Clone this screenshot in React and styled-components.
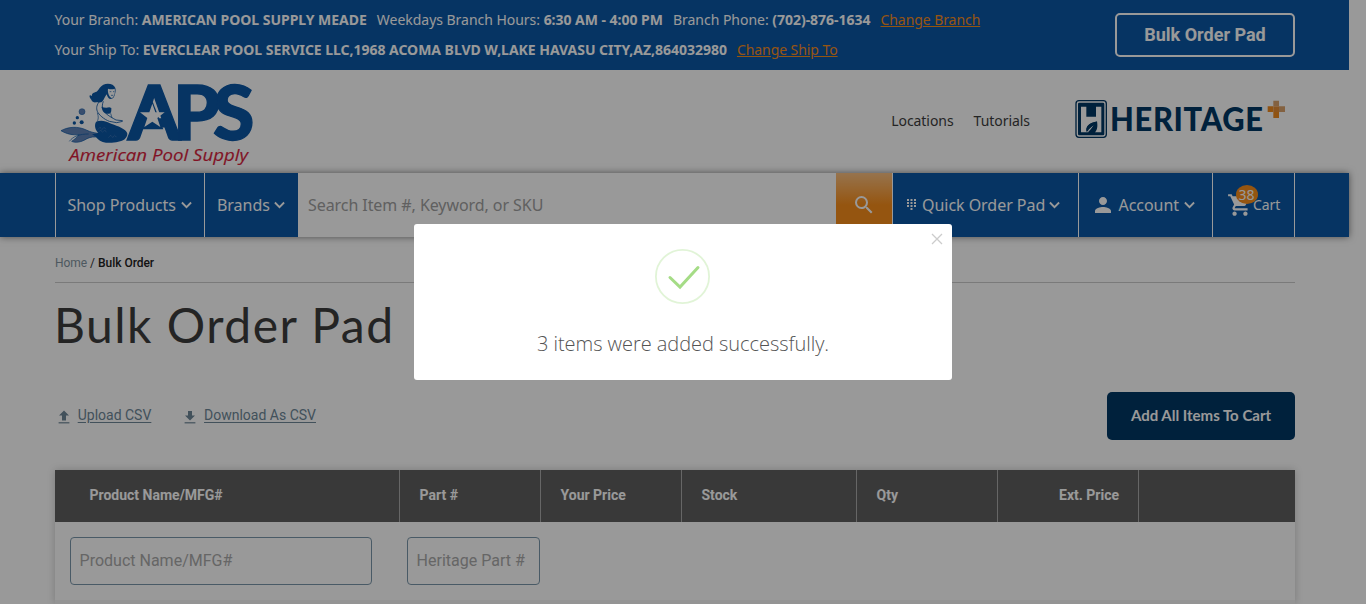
import React from "react";
import styled, { createGlobalStyle, css } from "styled-components";

const GlobalStyle = createGlobalStyle`
  * { box-sizing: border-box; }
  html, body { margin: 0; padding: 0; background: #fff; overflow: hidden; }
  body { font-family: "Noto Sans", "Open Sans", sans-serif; color: #3d3d3d; }
`;

const BLUE = "#0b57a6";
const NAVY = "#003764";
const ORANGE = "#f98e1b";

const Page = styled.div`
  width: 1349px;
  height: 604px;
`;

const TopBar = styled.div`
  height: 70px;
  padding: 0 54px 0 54.5px;
  background: ${BLUE};
  color: #fff;
  display: flex;
  justify-content: space-between;
`;

const BranchInfo = styled.div`
  padding-top: 5px;
  font-size: 14px;
  line-height: 30px;
  letter-spacing: -0.028px;
  white-space: nowrap;
`;

const InfoLine = styled.div`
  display: flex;
  gap: 10.1px;
  height: 30px;
`;

const InfoLink = styled.a`
  color: ${ORANGE};
  letter-spacing: -0.07px;
  text-decoration: underline;
`;

const BulkButton = styled.button`
  width: 180px;
  height: 44px;
  margin-top: 13px;
  padding: 0;
  border: 2px solid #fff;
  border-radius: 5px;
  background: transparent;
  color: #fff;
  font: 700 18px/40px Roboto, sans-serif;
`;

const Brand = styled.header`
  height: 103px;
  padding: 12px 62px 0 60px;
  display: flex;
`;

const BrandLogo = styled.svg`
  display: block;
  overflow: visible;
`;

const BrandLinks = styled.nav`
  margin: 28px 45px 0 auto;
  display: flex;
  gap: 20px;
  font-size: 14px;
  line-height: 22px;
  letter-spacing: -0.05px;
`;

const HeritageLogo = styled.svg`
  margin-top: 16px;
  display: block;
  overflow: visible;
`;

const NavBar = styled.div`
  height: 64px;
  padding-left: 55px;
  background: ${BLUE};
  box-shadow: 0 0 7px rgba(0, 0, 0, 0.5);
  display: flex;
  color: #fff;
`;

const NavItem = styled.div`
  width: ${(p) => p.$width}px;
  padding-left: ${(p) => p.$pad}px;
  border-left: 1px solid #fff;
  display: flex;
  align-items: center;
  font-size: ${(p) => p.$size || 16}px;
  white-space: nowrap;
  svg { flex: none; }
`;

const Label = styled.span`
  margin-left: ${(p) => p.$left || 0}px;
  margin-right: ${(p) => p.$right || 0}px;
  margin-bottom: ${(p) => p.$raise || 0}px;
  letter-spacing: -0.04px;
`;

const SearchField = styled.input`
  width: 538px;
  height: 64px;
  border: 0;
  padding: 0 10px;
  background: #fff;
  font: 16px "Noto Sans", sans-serif;
  letter-spacing: -0.07px;
  &::placeholder { color: #a0a0a0; opacity: 1; }
`;

const SearchButton = styled.button`
  width: 56px;
  height: 64px;
  border: 0;
  padding: 0;
  background: linear-gradient(#fbc182 0%, ${ORANGE} 50%);
  color: #fff;
  display: flex;
  align-items: center;
  justify-content: center;
`;

const CartIcon = styled.span`
  position: relative;
  display: flex;
  width: 26px;
`;

const CartBadge = styled.span`
  position: absolute;
  left: 9px;
  top: -7px;
  width: 22px;
  height: 19px;
  border-radius: 50%;
  background: ${ORANGE};
  font-size: 14px;
  line-height: 19px;
  text-align: center;
`;

const Main = styled.main`
  width: 1240px;
  margin-left: 55px;
`;

const Crumbs = styled.div`
  height: 46px;
  border-bottom: 1px solid #ccc;
  font: 12px/14px Roboto, sans-serif;
  letter-spacing: -0.03px;
  padding-top: 19px;
  color: #333;
  a { color: #8193a0; }
  b { font-weight: 500; color: #222; }
`;

const Title = styled.h1`
  margin: 0 0 0 -1px;
  height: 109px;
  padding-top: 14px;
  font: 400 48px/56px Lato, sans-serif;
  letter-spacing: 1.5px;
  color: #3d3d3d;
`;

const Actions = styled.div`
  height: 48px;
  display: flex;
  align-items: center;
`;

const FileLink = styled.a`
  display: flex;
  align-items: center;
  gap: 8px;
  margin-left: 2.7px;
  margin-right: 30px;
  margin-bottom: 2px;
  font: 14px/20px Roboto, sans-serif;
  color: #6e8798;
  text-decoration: underline;
  text-underline-offset: 2px;
  svg { margin-top: 3px; }
`;

const AddButton = styled.button`
  margin-left: auto;
  width: 188px;
  height: 48px;
  padding: 0 0 2px;
  border: 0;
  border-radius: 5px;
  background: ${NAVY};
  color: #fff;
  font: 700 15px Lato, sans-serif;
`;

const Table = styled.section`
  margin-top: 30px;
  height: 134px;
  box-shadow: 0 0 8px rgba(0, 0, 0, 0.2);
  background: #f7f7f7;
`;

const HeadRow = styled.div`
  height: 52px;
  display: flex;
  background: #5f5f5f;
`;

const HeadCell = styled.div`
  width: ${(p) => p.$width}px;
  padding: 0 19px 0 ${(p) => p.$pad || 19.5}px;
  font: 700 14px/51px Roboto, sans-serif;
  color: #fff;
  ${(p) => p.$end && css`text-align: right;`}
  & + & { border-left: 1px solid #aaa; }
`;

const EntryRow = styled.div`
  height: 78px;
  padding: 15px;
  background: #fff;
  display: flex;
  gap: 35px;
`;

const Field = styled.input`
  width: ${(p) => p.$width}px;
  height: 48px;
  border: 1px solid #7a97ab;
  border-radius: 4px;
  padding: 0 8.600px 2px;
  background: #fff;
  font: 16px Roboto, sans-serif;
  &::placeholder { color: #aaa; opacity: 1; }
`;

const Overlay = styled.div`
  position: fixed;
  inset: 0;
  background: rgba(0, 0, 0, 0.4);
  display: flex;
  justify-content: center;
  align-items: flex-start;
  padding-top: 224px;
`;

const Dialog = styled.div`
  position: relative;
  width: 538px;
  height: 156px;
  border-radius: 3px;
  background: #fff;
  display: flex;
  flex-direction: column;
  align-items: center;
  padding-top: 25px;
`;

const CloseIcon = styled.svg`
  position: absolute;
  right: 9px;
  top: 8.5px;
`;

const SuccessIcon = styled.svg`
  margin-right: 1px;
`;

const Message = styled.p`
  margin: 24px 0 0;
  font: 300 20px/32px "Open Sans", sans-serif;
  letter-spacing: -0.04px;
  color: #545454;
  white-space: nowrap;
`;

const Chevron = () => (
  <svg width="11" height="8" viewBox="0 0 11 8" fill="none" stroke="#fff" strokeWidth="1.8">
    <path d="M.9 1.500 5.500 6.200l4.600-4.700" />
  </svg>
);

const ApsLogo = () => (
  <BrandLogo width="194" height="86" viewBox="30 36 582 258">
    <g fill="#5f83b8" stroke={BLUE} strokeWidth="2">
      <path d="M33 182c22-12 50-14 76-2 12 6 22 8 34 10l4 12c-14-2-24-2-36 4-16 10-34 14-46 8 6-4 14-10 22-20-18 2-38-2-54-12z" />
      <path d="M58 214c12-16 32-22 58-22" fill="none" />
    </g>
    <g fill={BLUE}>
      <path d="M138 156c12-6 28-4 42 4 14 6 40 12 50 26 4 6 2 14-6 22-10 8-36 12-56 10-14-1-24-9-30-17l-12-9c8 0 14-1 18-4-8-8-12-22-6-32z" />
      <path d="M160 44c14-6 32-2 36 10 2 8 0 14-2 22-2 9-8 11-14 11-6-2-8-8-10-14-6 8-8 16-12 20-6 8-14 2-20 4-6 1-12-2-14-8-2-4-8-8-4-14 2 2 4 3 6 2-1-10 10-8 16-14 6-6 8-14 18-19z" />
      <path d="M154 110c8 4 18 4 24 2l6 2c0 8 0 12-3 16-10 4-19 0-23-8z" />
      <circle cx="96" cy="125" r="9" fill="#5f83b8" stroke={BLUE} strokeWidth="1.5" />
      <circle cx="82" cy="143" r="5" />
      <circle cx="95" cy="157" r="6" />
      <circle cx="73" cy="159" r="5" />
    </g>
    <path d="M174 56c8 2 14 2 20 0 2 10 0 24-8 28-8-2-14-16-12-28z" fill="#fff" />
    <path d="M179 65h5m5 0h4m-10 11h7" stroke={BLUE} strokeWidth="2" />
    <path d="M150 92c-10 12-12 22-8 32 4 10 20 24 36 30l22 4 18-4M160 94c-4 10-4 18 0 26 6 12 20 20 38 30l20 2" fill="none" stroke={BLUE} strokeWidth="2.5" />
    <path d="M142 128c4 12 4 20-2 30M182 130l4 14" fill="none" stroke={BLUE} strokeWidth="2" />
    <path d="M144 178l6-6 6 6 6-6 6 6m-22 8 6-5 6 5 6-5 6 5M176 202l6-6 6 6 6-6 6 6" fill="none" stroke="#7f9cc8" strokeWidth="1.5" strokeDasharray="3 2" />
    <text x="233" y="211" fontFamily="Lato, sans-serif" fontWeight="900" fontSize="226" letterSpacing="-22" fill={BLUE} stroke={BLUE} strokeWidth="4" textLength="358" lengthAdjust="spacingAndGlyphs">APS</text>
    <path d="M306 90l34 88h-64z" fill={BLUE} />
    <path d="M307 101l9 26 28 0-22 17 9 27-24-16-24 16 9-27-22-17 28 0z" fill="#fff" />
    <text x="58" y="274" fontFamily="Open Sans, sans-serif" fontStyle="italic" fontWeight="500" fontSize="51" fill="#d81f3e" stroke="#d81f3e" strokeWidth="0.5" textLength="536" lengthAdjust="spacingAndGlyphs">American Pool Supply</text>
  </BrandLogo>
);

const Heritage = () => (
  <HeritageLogo width="212" height="42" viewBox="0 0 636 126">
    <rect x="3" y="8" width="91" height="110" rx="9" fill="none" stroke={NAVY} strokeWidth="4" />
    <rect x="9" y="14" width="79" height="98" rx="4" fill={NAVY} />
    <path d="M18 26h16v30h29V26h16v77H60c8-8 8-20 6-33-10 3-24 6-30 17-3 5-3 11-1 16H18z" fill="#fff" />
    <path d="M34 103c6-12 14-18 24-24-6 10-12 18-18 24z" fill="#fff" />
    <path d="M64 71c-10 2-24 6-28 16-2 5-1 10 1 14 6-9 12-14 20-19-5 8-11 15-18 21 20-1 26-15 25-32z" fill={NAVY} />
    <text x="105" y="98" fontFamily="Lato, sans-serif" fontWeight="900" fontSize="95" letterSpacing="2" fill={NAVY} textLength="461" lengthAdjust="spacingAndGlyphs">HERITAGE</text>
    <path d="M595 8h17v17h-17zM612 25h18v17h-18z" fill="#dba26c" />
    <path d="M578 25h17v17h-17zM595 42h17v18h-17z" fill="#f08a1e" />
    <path d="M595 25h17v17h-17z" fill="#e58d35" />
  </HeritageLogo>
);

const TransferIcon = ({ down }) => (
  <svg width="12" height="16" viewBox="0 0 12 16" fill="#6e8798">
    <path d={down ? "M4 2h4v4.600h3L6 11.400 1 6.600h3z" : "M6 1.500 11 6.600H8v5H4v-5H1z"} />
    <path d="M.6 13.200h10.800v1.200H.6z" />
  </svg>
);

export default function App() {
  return (
    <>
      <GlobalStyle />
      <Page>
        <TopBar>
          <BranchInfo>
            <InfoLine>
              <span>Your Branch: <b>AMERICAN POOL SUPPLY MEADE</b></span>
              <span>Weekdays Branch Hours: <b>6:30 AM - 4:00 PM</b></span>
              <span>Branch Phone: <b>(702)-876-1634</b></span>
              <InfoLink>Change Branch</InfoLink>
            </InfoLine>
            <InfoLine>
              <span>Your Ship To: <b>EVERCLEAR POOL SERVICE LLC,1968 ACOMA BLVD W,LAKE HAVASU CITY,AZ,864032980</b></span>
              <InfoLink>Change Ship To</InfoLink>
            </InfoLine>
          </BranchInfo>
          <BulkButton>Bulk Order Pad</BulkButton>
        </TopBar>
        <Brand>
          <ApsLogo />
          <BrandLinks><span>Locations</span><span>Tutorials</span></BrandLinks>
          <Heritage />
        </Brand>
        <NavBar>
          <NavItem $width={149} $pad={11.5}><Label $right={5}>Shop Products</Label><Chevron /></NavItem>
          <NavItem $width={94} $pad={12}><Label $right={4.500}>Brands</Label><Chevron /></NavItem>
          <SearchField placeholder="Search Item #, Keyword, or SKU" />
          <SearchButton>
            <svg width="24" height="24" viewBox="0 0 24 24" fill="currentColor">
              <path d="M15.500 14h-.79l-.28-.27A6.470 6.470 0 0 0 16 9.500 6.500 6.500 0 1 0 9.500 16c1.610 0 3.090-.59 4.230-1.570l.27.28v.79l5 4.990L20.490 19l-4.990-5zm-6 0C7.010 14 5 11.990 5 9.500S7.010 5 9.500 5 14 7.010 14 9.500 11.990 14 9.500 14z" />
            </svg>
          </SearchButton>
          <NavItem $width={186} $pad={14}>
            <svg width="9" height="12" viewBox="0 0 9 12" fill="#fff">
              <path d="M0 0h2v2H0zM3.500 0h2v2h-2zM7 0h2v2H7zM0 3h2v2H0zM3.500 3h2v2h-2zM7 3h2v2H7zM0 6h2v2H0zM3.500 6h2v2h-2zM7 6h2v2H7zM3.500 9h2v2h-2z" />
            </svg>
            <Label $left={6} $right={4}>Quick Order Pad</Label><Chevron />
          </NavItem>
          <NavItem $width={134} $pad={12}>
            <svg width="24" height="24" viewBox="0 0 24 24" fill="#fff">
              <path d="M12 12c2.210 0 4-1.790 4-4s-1.790-4-4-4-4 1.790-4 4 1.790 4 4 4zm0 2c-2.670 0-8 1.340-8 4v2h16v-2c0-2.660-5.330-4-8-4z" />
            </svg>
            <Label $left={3.5} $right={4.5}>Account</Label><Chevron />
          </NavItem>
          <NavItem $width={82} $pad={13.500} $size={14}>
            <CartIcon>
              <svg width="26" height="26" viewBox="0 0 24 24" fill="#fff">
                <path d="M7 18c-1.100 0-1.990.9-1.990 2S5.900 22 7 22s2-.9 2-2-.9-2-2-2zM1 2v2h2l3.600 7.590-1.350 2.450c-.16.28-.25.61-.25.96 0 1.100.9 2 2 2h12v-2H7.420c-.14 0-.25-.11-.25-.25l.03-.12.9-1.630h7.450c.75 0 1.410-.41 1.750-1.030l3.580-6.490A1 1 0 0 0 20 4H5.210l-.94-2H1zm16 16c-1.100 0-1.990.9-1.990 2s.89 2 1.990 2 2-.9 2-2-.9-2-2-2z" />
              </svg>
              <CartBadge>38</CartBadge>
            </CartIcon>
            <Label $left={0.5} $raise={2}>Cart</Label>
          </NavItem>
          <NavItem $width={54} />
        </NavBar>
        <Main>
          <Crumbs><a>Home</a> / <b>Bulk Order</b></Crumbs>
          <Title>Bulk Order Pad</Title>
          <Actions>
            <FileLink><TransferIcon />Upload CSV</FileLink>
            <FileLink><TransferIcon down />Download As CSV</FileLink>
            <AddButton>Add All Items To Cart</AddButton>
          </Actions>
          <Table>
            <HeadRow>
              <HeadCell $width={344} $pad={34.5}>Product Name/MFG#</HeadCell>
              <HeadCell $width={141}>Part #</HeadCell>
              <HeadCell $width={141}>Your Price</HeadCell>
              <HeadCell $width={175}>Stock</HeadCell>
              <HeadCell $width={141}>Qty</HeadCell>
              <HeadCell $width={141} $end>Ext. Price</HeadCell>
              <HeadCell $width={157} />
            </HeadRow>
            <EntryRow>
              <Field $width={302} placeholder="Product Name/MFG#" />
              <Field $width={133} placeholder="Heritage Part #" />
            </EntryRow>
          </Table>
        </Main>
      </Page>
      <Overlay>
        <Dialog>
          <CloseIcon width="12" height="12" viewBox="0 0 12 12" stroke="#ccc" strokeWidth="1.300">
            <path d="M1 1l10 10M11 1 1 11" />
          </CloseIcon>
          <SuccessIcon width="55" height="55" viewBox="0 0 55 55" fill="none">
            <circle cx="27.500" cy="27.500" r="26.600" stroke="#e1f4d7" strokeWidth="1.800" />
            <path d="M15 28.500 25 38 43 18.500" stroke="#a5dc86" strokeWidth="3" strokeLinecap="round" />
          </SuccessIcon>
          <Message>3 items were added successfully.</Message>
        </Dialog>
      </Overlay>
    </>
  );
}
